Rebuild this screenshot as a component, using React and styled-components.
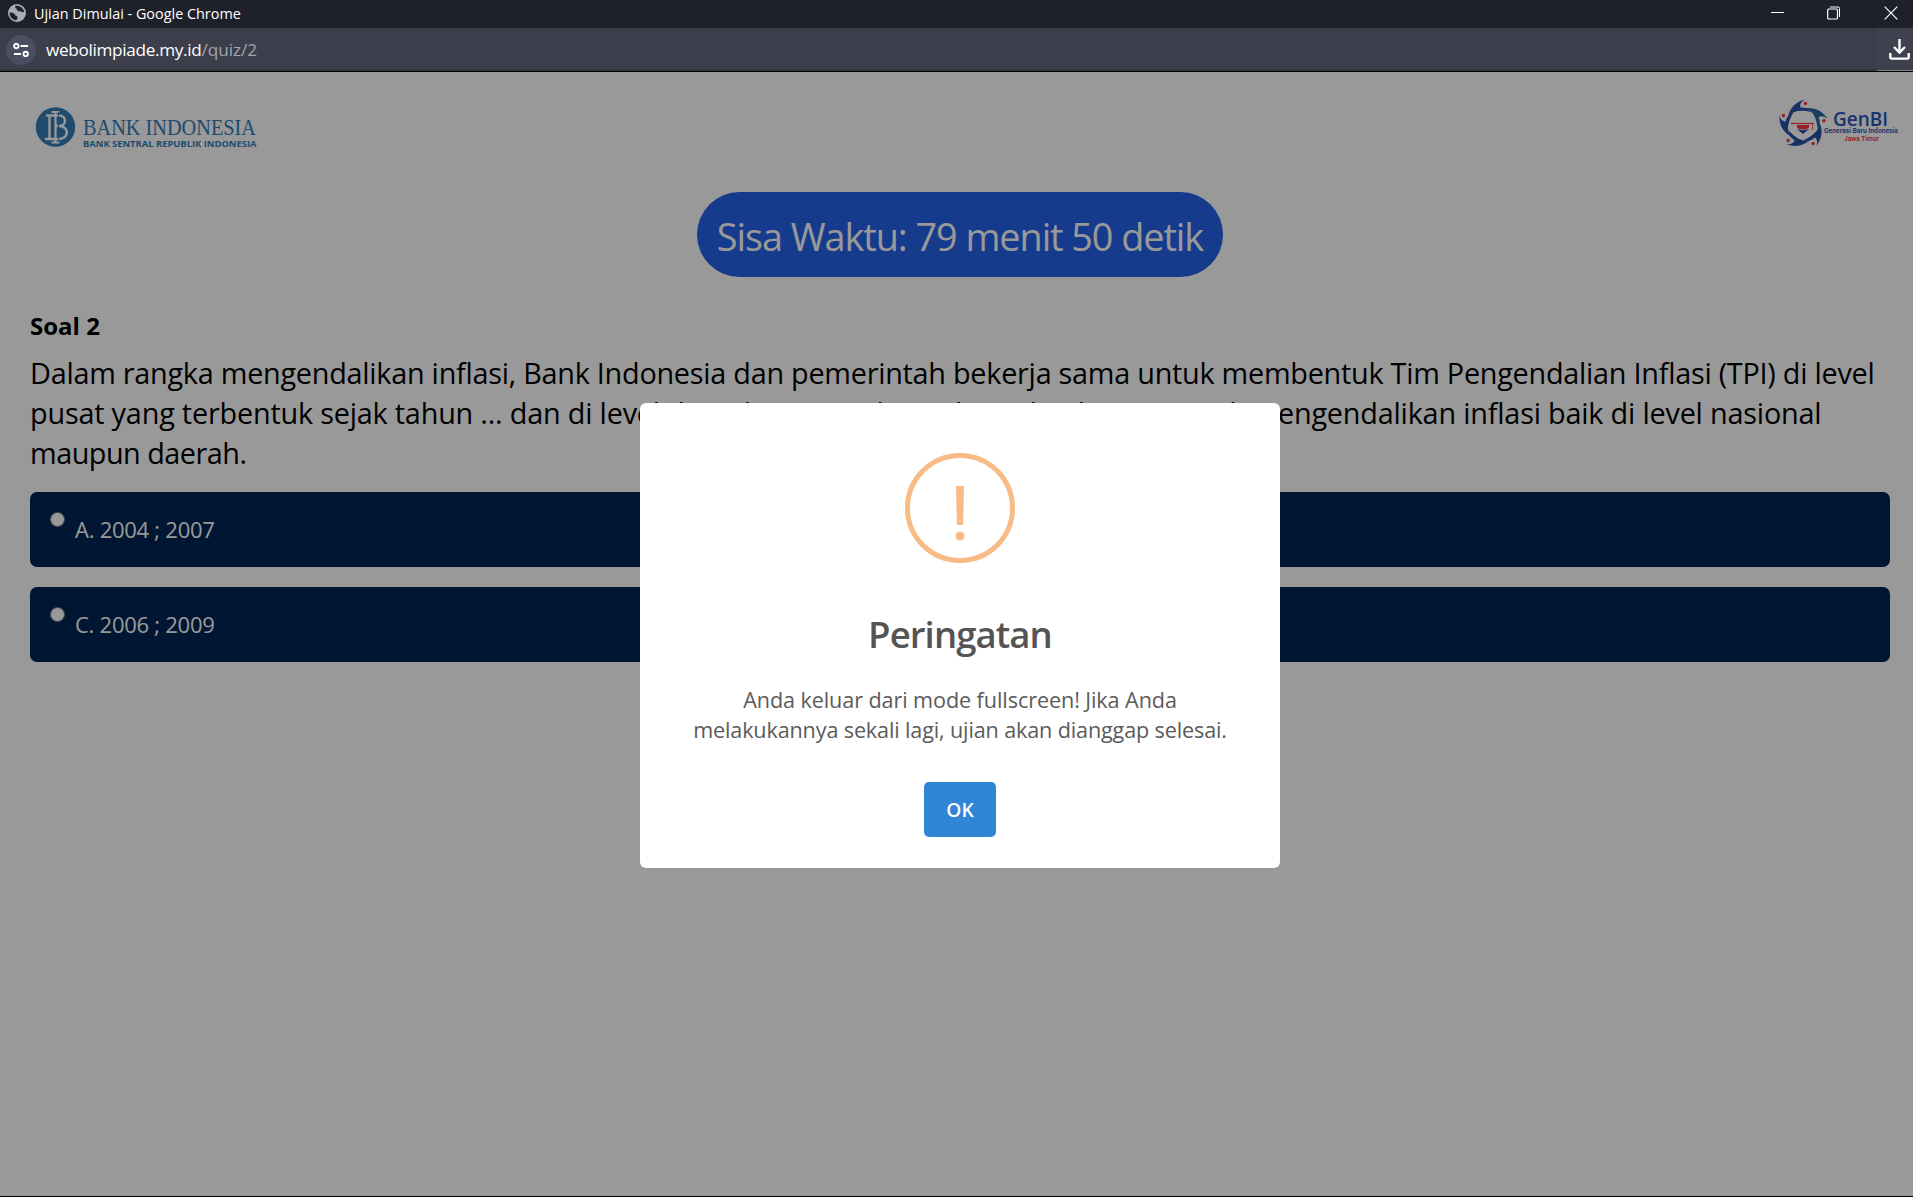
import React from "react";
import styled, { createGlobalStyle } from "styled-components";

const GlobalStyle = createGlobalStyle`
  *, *::before, *::after { box-sizing: border-box; }
  body { margin: 0; background: #000; overflow: hidden; font-family: "Open Sans", "Noto Sans", sans-serif; }
  h1, h2, p { margin: 0; }
`;

const Window = styled.div`
  display: flex;
  flex-direction: column;
  height: 1197px;
  border-bottom: 1px solid #000;
`;

const TitleBar = styled.header`
  display: flex;
  align-items: center;
  height: 28px;
  padding: 0 15px 2px 8px;
  background: #1f212a;
  color: #fff;
`;

const WindowTitle = styled.span`
  flex: 1;
  margin-left: 8px;
  padding-top: 1px;
  font-size: 14.4px;
  line-height: 26px;
  white-space: nowrap;
`;

const WindowControls = styled.div`
  display: flex;
  align-items: center;
  gap: 43px;
`;

const AddressBar = styled.div`
  display: flex;
  align-items: center;
  height: 44px;
  background: #3c3e4b;
  border-bottom: 1px solid #000;
  box-shadow: inset 0 -2px 0 #343641, inset 0 1px 0 #373944;
`;

const SiteInfo = styled.span`
  display: grid;
  place-items: center;
  width: 30px;
  height: 30px;
  margin: 0 10px 0 6px;
  border-radius: 50%;
  background: #4b4d61;
`;

const Url = styled.span`
  flex: 1;
  color: #fff;
  font-size: 17.2px;
  line-height: 42px;
  white-space: nowrap;
  letter-spacing: -0.33px;
`;

const UrlPath = styled.span`
  color: #a3a5ae;
  letter-spacing: -0.05px;
`;

const DownloadSlot = styled.span`
  display: flex;
  align-items: center;
  justify-content: flex-end;
  width: 36px;
  height: 43px;
  padding-right: 3px;
  background: #3f414f;
  border-bottom: 1px solid #7b7d86;
`;

const Page = styled.main`
  position: relative;
  flex: 1;
  padding: 0 23px 0 30px;
  background: #fff;
  color: #000;
`;

const LogoRow = styled.div`
  display: flex;
  justify-content: space-between;
  height: 120px;
  padding: 22px 0 0;
  margin-right: -11px;

  svg { overflow: visible; }
`;

const Timer = styled.div`
  width: 526px;
  height: 85px;
  margin: 0 auto;
  border-radius: 43px;
  background: #2563eb;
  color: #fff;
  font-size: 37.8px;
  line-height: 89px;
  text-align: center;
  white-space: nowrap;
  letter-spacing: -1.05px;
`;

const QuestionTitle = styled.h1`
  margin-top: 31px;
  font-size: 24px;
  font-weight: 700;
  line-height: 36px;
`;

const Question = styled.p`
  margin: 9px 0 19px;
  font-size: 28.8px;
  line-height: 40px;
`;

const QuestionLine = styled.span`
  display: block;
  white-space: nowrap;
  letter-spacing: ${(p) => p.$tracking || 0}px;
`;

const Options = styled.div`
  display: flex;
  flex-direction: column;
  gap: 20px;
`;

const Option = styled.label`
  display: flex;
  height: 75px;
  padding-left: 20px;
  border-radius: 7px;
  background: #002655;
  color: #fff;
`;

const Radio = styled.span`
  width: 15px;
  height: 15px;
  margin: 20px 10px 0 0;
  border: 1px solid #767676;
  border-radius: 50%;
  background: #fff;
`;

const OptionText = styled.span`
  font-size: 22px;
  line-height: 75px;
  white-space: nowrap;
  letter-spacing: -0.26px;
`;

const Overlay = styled.div`
  position: absolute;
  inset: 0;
  display: flex;
  align-items: center;
  justify-content: center;
  padding: 3px 0 0 7px;
  background: rgba(0, 0, 0, 0.4);
`;

const Dialog = styled.section`
  display: flex;
  flex-direction: column;
  align-items: center;
  width: 640px;
  height: 465px;
  padding-top: 50px;
  border-radius: 6px;
  background: #fff;
`;

const DialogTitle = styled.h2`
  margin-top: 46px;
  color: #545454;
  font-size: 36.5px;
  font-weight: 600;
  line-height: 50px;
  letter-spacing: -0.9px;
`;

const DialogText = styled.p`
  margin: 26px 0 37px;
  color: #5b5b5b;
  font-size: 21.6px;
  line-height: 30px;
  text-align: center;
`;

const DialogLine = styled.span`
  display: block;
  white-space: nowrap;
  letter-spacing: ${(p) => p.$tracking || 0}px;
`;

const OkButton = styled.button`
  width: 72px;
  height: 55px;
  padding: 0;
  border: 0;
  border-radius: 5px;
  background: #3085d6;
  color: #fff;
  font: 600 19.2px/55px "Open Sans", sans-serif;
`;

const GlobeIcon = () => (
  <svg width="18" height="18" viewBox="0 0 18 18">
    <circle cx="9" cy="9" r="9" fill="#a9abb1" />
    <path d="M1.500 8.500c3.500-.4 5 .6 5.600 2.400.3 1.200 2 .6 2.400 2 .3 1.300-.6 2-1.200 3.400C4.200 15.900 1.500 12.500 1.500 8.500z" fill="#1f212a" />
    <path d="M7.500 1.700c-.5 1.500-.3 2.600.9 3 1.200.3.400 2 1.700 2.500 1.300.4 2.300-.4 3.200.4.900.9 1.900.6 2.900.2C15.500 4 12 1.300 7.500 1.700z" fill="#1f212a" />
  </svg>
);

const TuneIcon = () => (
  <svg width="16" height="14" viewBox="0 0 16 14" fill="none" stroke="#fff" strokeWidth="1.9">
    <circle cx="3.300" cy="3" r="2.200" />
    <path d="M7.500 3H15M1 11h7" />
    <circle cx="12.700" cy="11" r="2.200" />
  </svg>
);

const MinimizeIcon = () => (
  <svg width="13" height="14" viewBox="0 0 13 14">
    <path d="M0 6.500h13" stroke="#fff" />
  </svg>
);

const RestoreIcon = () => (
  <svg width="14" height="14" viewBox="0 0 14 14" fill="none" stroke="#fff">
    <path d="M3 1h8q1.500 0 1.500 1.500V11" />
    <rect x="0.700" y="3" width="9.800" height="10" rx="1" fill="#1f212a" strokeWidth="1.200" />
  </svg>
);

const CloseIcon = () => (
  <svg width="14" height="14" viewBox="0 0 14 14">
    <path d="M.7.7l12.600 12.600M13.300.7L.7 13.300" stroke="#fff" strokeWidth="1.200" />
  </svg>
);

const DownloadIcon = () => (
  <svg width="21" height="21" viewBox="0 0 21 21" fill="none" stroke="#fff" strokeWidth="2.400">
    <path d="M10.500 0v13M5 8l5.500 5.500L16 8M1.300 14v4q0 1.600 1.600 1.600h15.200q1.600 0 1.600-1.600v-4" />
  </svg>
);

const WarningIcon = () => (
  <svg width="110" height="110" viewBox="0 0 110 110">
    <circle cx="55" cy="55" r="52.500" fill="none" stroke="#f8bb86" strokeWidth="5" />
    <path d="M51 33h8l-.8 39h-6.400z" fill="#f8bb86" />
    <circle cx="55" cy="83" r="4.500" fill="#f8bb86" />
  </svg>
);

const BankIndonesiaLogo = () => (
  <svg width="230" height="60" viewBox="30 94 230 60">
    <circle cx="55.500" cy="127" r="19.700" fill="#327eb8" />
    <g fill="none" stroke="#fff">
      <path d="M51.500 112h8M55.500 112v30M51.500 142.500h8" strokeWidth="2.200" />
      <path d="M46 115.500h13c8 0 8 10.500 0 10.500h-4M59 126c10.500 0 10.500 13 0 13H45M49.500 115.500V139" strokeWidth="2.400" />
      <path d="M58.500 112v30" strokeWidth="1" stroke="#327eb8" />
    </g>
    <g fill="#327eb8">
      <text x="83" y="135" fontFamily="Liberation Serif, serif" fontSize="23.500" textLength="173" lengthAdjust="spacingAndGlyphs">BANK INDONESIA</text>
      <text x="83" y="147" fontFamily="Open Sans, sans-serif" fontWeight="700" fontSize="9.500" textLength="173.500" lengthAdjust="spacingAndGlyphs">BANK SENTRAL REPUBLIK INDONESIA</text>
    </g>
  </svg>
);

const GenBiLogo = () => (
  <svg width="125" height="60" viewBox="1776 94 125 60">
    {[0, 72, 144, 216, 288].map((angle) => (
      <g key={angle} transform={`rotate(${angle} 1802.800 124.800)`}>
        <path d="M1804.500 99.500C1795.500 102.500 1790.500 107 1788 116.500C1792.500 111 1800 109.500 1811.500 112C1808.500 108 1804.500 107 1800.500 107.500C1799.500 104.500 1801 102 1804.500 99.500z" fill={angle === 72 ? "#2b6aa0" : "#2b50a8"} />
        <circle cx="1805.500" cy="103.500" r="1.700" fill="#ff3540" />
      </g>
    ))}
    <path d="M1791 123.500h23" stroke="#ff3540" strokeWidth="1.200" />
    <path d="M1797 125h12v2.500c-2 2.500-10 2.500-12 0z" fill="#ff3540" />
    <path d="M1797 129l6 5 6-5c-4 1.500-8 1.500-12 0z" fill="#2b50a8" />
    <path d="M1812.500 124v6" stroke="#ff3540" strokeWidth=".8" />
    <text x="1833" y="125.700" fontFamily="Open Sans, sans-serif" fontWeight="600" fontSize="20.500" fill="#2a55b8" textLength="55" lengthAdjust="spacingAndGlyphs">GenBI</text>
    <g fontFamily="Roboto, sans-serif" fontWeight="600" fontSize="7.200">
      <text x="1824" y="133" fill="#2a55b8" textLength="74" lengthAdjust="spacingAndGlyphs">Generasi Baru Indonesia</text>
      <text x="1844" y="140.500" fill="#ff3540" textLength="35" lengthAdjust="spacingAndGlyphs">Jawa Timur</text>
    </g>
  </svg>
);

export default function App() {
  return (
    <>
      <GlobalStyle />
      <Window>
        <TitleBar>
          <GlobeIcon />
          <WindowTitle>Ujian Dimulai - Google Chrome</WindowTitle>
          <WindowControls>
            <MinimizeIcon />
            <RestoreIcon />
            <CloseIcon />
          </WindowControls>
        </TitleBar>
        <AddressBar>
          <SiteInfo><TuneIcon /></SiteInfo>
          <Url>webolimpiade.my.id<UrlPath>/quiz/2</UrlPath></Url>
          <DownloadSlot><DownloadIcon /></DownloadSlot>
        </AddressBar>
        <Page>
          <LogoRow>
            <BankIndonesiaLogo />
            <GenBiLogo />
          </LogoRow>
          <Timer>Sisa Waktu: 79 menit 50 detik</Timer>
          <QuestionTitle>Soal 2</QuestionTitle>
          <Question>
            <QuestionLine $tracking={-0.25}>Dalam rangka mengendalikan inflasi, Bank Indonesia dan pemerintah bekerja sama untuk membentuk Tim Pengendalian Inflasi (TPI) di level</QuestionLine>
            <QuestionLine $tracking={-0.19}>pusat yang terbentuk sejak tahun ... dan di level daerah yang terbentuk sejak tahun ... untuk mengendalikan inflasi baik di level nasional</QuestionLine>
            <QuestionLine $tracking={-0.5}>maupun daerah.</QuestionLine>
          </Question>
          <Options>
            <Option><Radio /><OptionText>A. 2004 ; 2007</OptionText></Option>
            <Option><Radio /><OptionText>C. 2006 ; 2009</OptionText></Option>
          </Options>
          <Overlay>
            <Dialog>
              <WarningIcon />
              <DialogTitle>Peringatan</DialogTitle>
              <DialogText>
                <DialogLine $tracking={-0.085}>Anda keluar dari mode fullscreen! Jika Anda</DialogLine>
                <DialogLine $tracking={-0.14}>melakukannya sekali lagi, ujian akan dianggap selesai.</DialogLine>
              </DialogText>
              <OkButton>OK</OkButton>
            </Dialog>
          </Overlay>
        </Page>
      </Window>
    </>
  );
}
